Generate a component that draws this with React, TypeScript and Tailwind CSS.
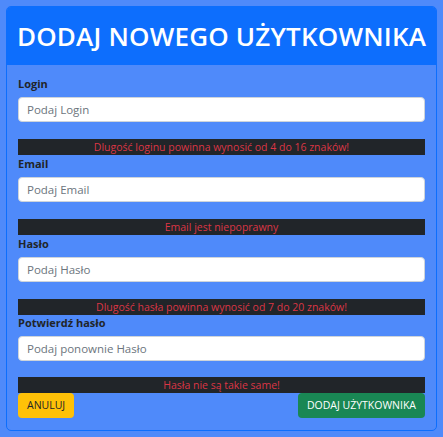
export default function App() {
  const fields = [
    { label: "Login", placeholder: "Podaj Login", error: "Dlugość loginu powinna wynosić od 4 do 16 znaków!" },
    { label: "Email", placeholder: "Podaj Email", error: "Email jest niepoprawny" },
    { label: "Hasło", placeholder: "Podaj Hasło", error: "Dlugość hasła powinna wynosić od 7 do 20 znaków!" },
    { label: "Potwierdź hasło", placeholder: "Podaj ponownie Hasło", error: "Hasła nie są takie same!" },
  ];

  return (
    <div className="min-h-[437px] bg-[#4f8afa] p-[6px] font-['Open_Sans',sans-serif]">
      <div className="rounded-[5px] border border-[#0d6efd] overflow-hidden">
        <div className="bg-[#0d6efd] h-[58px] flex items-center justify-center">
          <h1 className="text-white text-[26px] font-semibold tracking-[0.2px]">DODAJ NOWEGO UŻYTKOWNIKA</h1>
        </div>
        <div className="px-[11px] pt-[10px] pb-[12px]">
          {fields.map((f, i) => (
            <div key={f.label} className={i === 3 ? "-mt-[1px]" : ""}>
              <label className="block text-[11px] font-bold leading-[18px] text-[#212529] mb-[4px]">{f.label}</label>
              <input
                type="text"
                placeholder={f.placeholder}
                className="block w-full h-[25px] rounded-[4px] bg-white border border-[#ced4da] px-[8px] text-[11.5px] placeholder:text-[#6c757d] outline-none"
              />
              <div className={`${i === 3 ? "mt-[16px]" : "mt-[17px]"} h-[16px] bg-[#212529] text-[#dc3545] text-[10.5px] leading-[16px] text-center`}>{f.error}</div>
            </div>
          ))}
          <div className="flex justify-between">
            <button className="h-[25px] px-[9px] rounded-[4px] bg-[#ffc107] text-[#212529] text-[10.5px]">ANULUJ</button>
            <button className="h-[25px] px-[9px] rounded-[4px] bg-[#198754] text-white text-[10.5px]">DODAJ UŻYTKOWNIKA</button>
          </div>
        </div>
      </div>
    </div>
  );
}
